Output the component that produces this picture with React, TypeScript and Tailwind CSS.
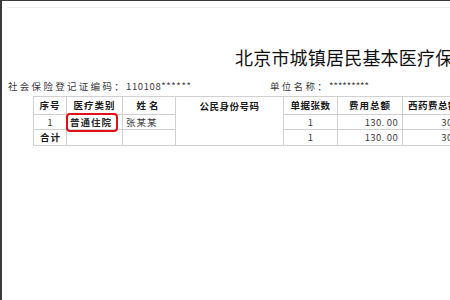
export default function App() {
  const cell = "border border-[#d0d0d0] p-0";
  return (
    <div className="w-[450px] h-[300px] overflow-hidden bg-white border-l-2 border-t border-[#3a3a3a] font-[family-name:'Noto_Sans_CJK_SC',sans-serif] text-[#333]">
      <div className="mt-[6px] ml-[5px] h-px bg-[#ededed]" />

      {/* title */}
      <div className="mt-[38px] pl-[233px] whitespace-nowrap text-[18px] leading-[22px] text-[#111] tracking-[0.2px]">
        北京市城镇居民基本医疗保险
      </div>

      {/* info line */}
      <div className="mt-[12px] flex whitespace-nowrap text-[9.5px] leading-[12px] text-[#3a3a3a]">
        <div className="w-[268px] pl-[6px]">
          <span className="tracking-[2.3px]">社会保险登记证编码：</span>
          <span className="tracking-[0.6px]">110108******</span>
        </div>
        <div>
          <span className="tracking-[2.3px]">单位名称：</span>
          <span>*********</span>
        </div>
      </div>

      {/* table */}
      <table className="mt-[4px] ml-[31px] table-fixed border-collapse w-[475px] text-[9.5px] whitespace-nowrap">
        <colgroup>
          <col className="w-[33px]" />
          <col className="w-[56px]" />
          <col className="w-[53px]" />
          <col className="w-[108px]" />
          <col className="w-[54px]" />
          <col className="w-[65px]" />
          <col className="w-[106px]" />
        </colgroup>
        <tbody>
          <tr className="h-[18px] font-bold text-[#1a1a1a]">
            <td className={`${cell} text-center tracking-[1px]`}>序号</td>
            <td className={`${cell} text-center tracking-[1px]`}>医疗类别</td>
            <td className={`${cell} text-center tracking-[3px]`}>姓名</td>
            <td rowSpan={3} className={`${cell} align-top pt-[2px] text-center tracking-[0.5px]`}>公民身份号码</td>
            <td className={`${cell} text-center tracking-[0.5px]`}>单据张数</td>
            <td className={`${cell} text-center tracking-[1px]`}>费用总额</td>
            <td className={`${cell} pl-[5px] tracking-[0.5px]`}>西药费总额</td>
          </tr>
          <tr className="h-[15px] text-[#3a3a3a]">
            <td className={`${cell} text-center`}>1</td>
            <td className={`${cell} relative`}>
              <div className="absolute left-[-1px] top-[-2px] w-[52px] h-[19px] rounded-[4px] border-2 border-[#e0101a]" />
              <span className="pl-[3px] tracking-[1px] font-bold text-[#2a2a2a]">普通住院</span>
            </td>
            <td className={`${cell} pl-[3px] tracking-[1px]`}>张某某</td>
            <td className={`${cell} text-center`}>1</td>
            <td className={`${cell} text-right pr-[4px] tracking-[0.3px]`}>130. 00</td>
            <td className={`${cell} text-right pr-[39px] tracking-[0.3px]`}>30. 00</td>
          </tr>
          <tr className="h-[14px] text-[#3a3a3a]">
            <td className={`${cell} pl-[6px] font-bold tracking-[1px] text-[#1a1a1a]`}>合计</td>
            <td className={cell} />
            <td className={cell} />
            <td className={`${cell} text-center`}>1</td>
            <td className={`${cell} text-right pr-[4px] tracking-[0.3px]`}>130. 00</td>
            <td className={`${cell} text-right pr-[39px] tracking-[0.3px]`}>30. 00</td>
          </tr>
        </tbody>
      </table>
    </div>
  );
}
